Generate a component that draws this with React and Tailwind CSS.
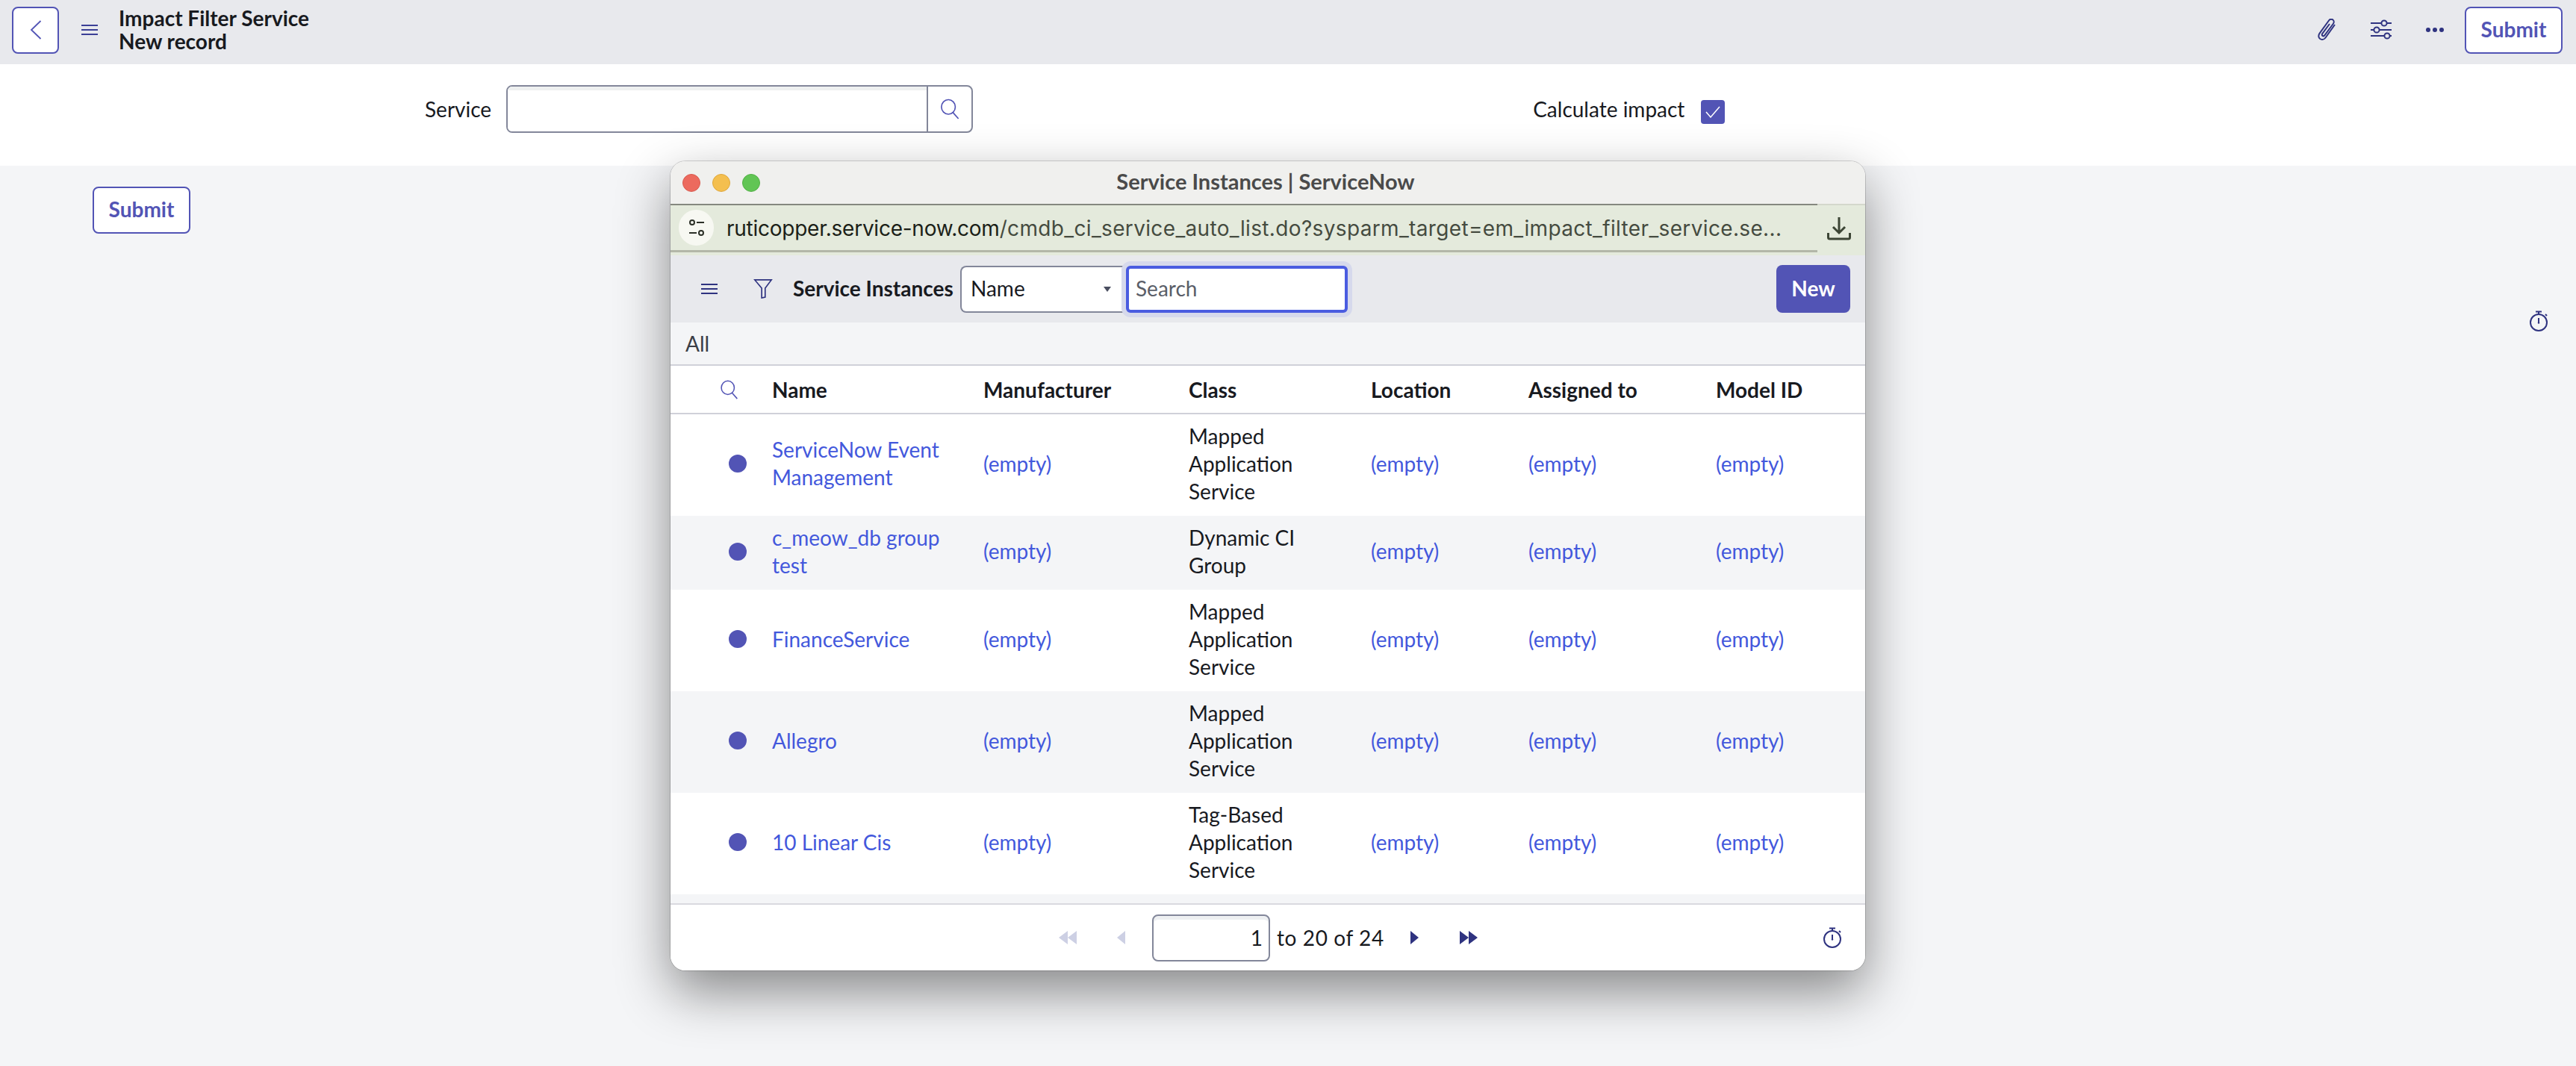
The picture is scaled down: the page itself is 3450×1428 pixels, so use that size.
const rows = [
  { name: "ServiceNow Event Management", cls: "Mapped Application Service", alt: false },
  { name: "c_meow_db group test", cls: "Dynamic CI Group", alt: true },
  { name: "FinanceService", cls: "Mapped Application Service", alt: false },
  { name: "Allegro", cls: "Mapped Application Service", alt: true },
  { name: "10 Linear Cis", cls: "Tag-Based Application Service", alt: false },
];

const cols = "grid grid-cols-[136px_283px_275px_244px_211px_251px_1fr] items-center";

function Burger({ className }) {
  return (
    <svg viewBox="0 0 22 16" className={className} fill="none" stroke="currentColor" strokeWidth="2">
      <path d="M0 2h22M0 8h22M0 14h22" />
    </svg>
  );
}

function Magnifier({ className }) {
  return (
    <svg viewBox="0 0 28 30" className={className} fill="none" stroke="currentColor" strokeWidth="1.8">
      <ellipse cx="12" cy="12" rx="10" ry="10.5" />
      <path d="M18.5 20l8 9" />
    </svg>
  );
}

function Timer({ className }) {
  return (
    <svg viewBox="0 0 26 28" className={className} fill="none" stroke="currentColor" strokeWidth="2">
      <circle cx="13" cy="16" r="11" />
      <path d="M9 1.500h8M13 2v3M22 5l2 2" />
      <path d="M13 10v6" />
      <circle cx="13" cy="16.500" r="1.200" fill="currentColor" stroke="none" />
    </svg>
  );
}

function Triangles({ dir, count, className }) {
  const d =
    dir === "left"
      ? count === 2
        ? "M12 0v18L0 9zM24 0v18L12 9z"
        : "M11 0v18L0 9z"
      : count === 2
        ? "M0 0v18l12-9zM12 0v18l12-9z"
        : "M0 0v18l11-9z";
  return (
    <svg viewBox={count === 2 ? "0 0 24 18" : "0 0 11 18"} className={className} fill="currentColor">
      <path d={d} />
    </svg>
  );
}

function SubmitButton() {
  return (
    <button className="w-[131px] h-[63px] pb-[3px] bg-white border-2 border-[#5254b5] rounded-[8px] text-[#5254b5] text-[28px] font-bold">
      Submit
    </button>
  );
}

function Popup() {
  return (
    <div className="absolute left-[898px] top-[216px] w-[1600px] h-[1084px] flex flex-col rounded-[20px] overflow-hidden bg-white shadow-[0_0_0_1px_rgba(0,0,0,0.16),0_28px_70px_rgba(0,0,0,0.45)]">
      {/* mac window title */}
      <div className="relative h-[57px] shrink-0 bg-[#f0f0ee] flex items-center pl-[16px] gap-[16px]">
        <span className="w-[24px] h-[24px] rounded-full bg-[#ec6a5e] border border-[#d85a4f]" />
        <span className="w-[24px] h-[24px] rounded-full bg-[#f4bf4f] border border-[#dea73c]" />
        <span className="w-[24px] h-[24px] rounded-full bg-[#61c554] border border-[#52b045]" />
        <div className="absolute inset-x-0 pr-[6px] pb-[4px] text-center text-[29px] font-bold text-[#4a4a4a] pointer-events-none">
          Service Instances | ServiceNow
        </div>
      </div>

      {/* url bar */}
      <div className="h-[69px] shrink-0 bg-[#e4eadc] flex items-start">
        <div className="w-[1536px] h-[65px] flex items-center pl-[11px] border-t-2 border-t-[#85887f] border-b-[3px] border-b-[#b3b7a8]">
          <div className="w-[47px] h-[48px] rounded-full bg-[#f7f8f2] flex items-center justify-center">
            <svg viewBox="0 0 22 24" className="w-[22px] h-[24px]" fill="none" stroke="#2c3028" strokeWidth="2">
              <circle cx="5" cy="5" r="3" />
              <path d="M11 5h10M1 19h10" />
              <circle cx="17" cy="19" r="3" />
            </svg>
          </div>
          <div className="ml-[17px] mt-[1px] [font-family:Inter,sans-serif] text-[28px] tracking-[0.35px] whitespace-nowrap text-[#454b40]">
            <span className="text-[#1b1f18] tracking-[-0.25px]">ruticopper.service-now.com</span>
            /cmdb_ci_service_auto_list.do?sysparm_target=em_impact_filter_service.se...
          </div>
        </div>
        <div className="flex-1 h-[64px] flex items-center justify-center pr-[6px] border-t-2 border-t-[#d4d8cc]">
          <svg viewBox="0 0 32 32" className="w-[32px] h-[32px]" fill="none" stroke="#3c4535" strokeWidth="3">
            <path d="M16 1v20M8 14l8 8 8-8" />
            <path d="M1.500 22v6a2 2 0 0 0 2 2h25a2 2 0 0 0 2-2v-6" />
          </svg>
        </div>
      </div>

      {/* list toolbar */}
      <div className="h-[90px] shrink-0 bg-[#e8e9ed] flex items-center pl-[41px] pr-[20px]">
        <Burger className="w-[22px] h-[16px] text-[#2f3380]" />
        <svg viewBox="0 0 26 28" className="w-[26px] h-[26px] ml-[48px] text-[#2f3380]" fill="none" stroke="currentColor" strokeWidth="1.8">
          <path d="M1 1h24L16 13v13l-5 1V13z" />
        </svg>
        <span className="ml-[27px] pb-[2px] w-[214px] text-[28px] font-bold text-[#181a1f] whitespace-nowrap">
          Service Instances
        </span>
        <div className="ml-[10px] w-[222px] h-[63px] pb-[2px] bg-white border-2 border-r-0 border-[#83879a] rounded-l-[8px] flex items-center pl-[12px] pr-[20px] justify-between text-[28px] text-[#181a1f]">
          Name
          <span className="mt-[3px] w-0 h-0 border-x-[5px] border-x-transparent border-t-[7px] border-t-[#4a4e60]" />
        </div>
        <div className="w-[297px] h-[63px] pb-[2px] bg-white border-4 border-[#4a5ce0] rounded-[6px] ring-[6px] ring-[#d6d9ec] flex items-center pl-[9px] text-[28px] text-[#5a5e68]">
          Search
        </div>
        <button className="ml-auto w-[99px] h-[64px] pb-[3px] rounded-[8px] bg-[#5254b5] text-white text-[28px] font-bold">
          New
        </button>
      </div>

      <div className="h-[58px] shrink-0 bg-[#f4f5f7] border-b-2 border-[#d0d1d9] flex items-center pl-[20px] text-[28px] text-[#3a3d46]">
        All
      </div>

      {/* table head */}
      <div className={`${cols} h-[65px] shrink-0 border-b-2 border-[#d0d1d9] text-[28px] font-bold text-[#181a1f]`}>
        <div className="flex justify-center pl-[21px]">
          <Magnifier className="w-[25px] h-[26px] text-[#5254b5]" />
        </div>
        <div>Name</div>
        <div>Manufacturer</div>
        <div>Class</div>
        <div>Location</div>
        <div>Assigned to</div>
        <div>Model ID</div>
      </div>

      {/* rows */}
      <div className="flex-1 bg-[#f4f5f7]">
        {rows.map((row) => (
          <div
            key={row.name}
            className={`${cols} pt-[10.5px] pb-[14.5px] text-[28px] leading-[37px] ${row.alt ? "bg-[#f4f5f7]" : "bg-white"}`}
          >
            <div className="flex justify-center pl-[44px]">
              <span className="w-[24px] h-[24px] rounded-full bg-[#5254b5]" />
            </div>
            <div className="pr-[40px] text-[#4358dc]">{row.name}</div>
            <div className="text-[#4358dc]">(empty)</div>
            <div className="pr-[70px] text-[#181a1f]">{row.cls}</div>
            <div className="text-[#4358dc]">(empty)</div>
            <div className="text-[#4358dc]">(empty)</div>
            <div className="text-[#4358dc]">(empty)</div>
          </div>
        ))}
      </div>

      {/* pagination */}
      <div className="h-[90px] shrink-0 border-t-2 border-[#d9d9df] bg-white flex items-center pl-[520px] pr-[31px] text-[28px] text-[#181a1f]">
        <Triangles dir="left" count={2} className="w-[24px] h-[18px] text-[#cdd0e4]" />
        <Triangles dir="left" count={1} className="w-[11px] h-[18px] ml-[54px] text-[#cdd0e4]" />
        <div className="ml-[36px] w-[158px] h-[63px] bg-white border-2 border-[#83879a] rounded-[8px] shadow-[inset_0_5px_0_#eef0f2] flex items-center justify-end pr-[8px]">
          1
        </div>
        <span className="ml-[9px] w-[145px] tracking-[0.6px] whitespace-nowrap">to 20 of 24</span>
        <Triangles dir="right" count={1} className="w-[11px] h-[18px] ml-[34px] text-[#2f3380]" />
        <Triangles dir="right" count={2} className="w-[24px] h-[18px] ml-[55px] text-[#2f3380]" />
        <Timer className="w-[26px] h-[28px] ml-auto text-[#2f3380]" />
      </div>
    </div>
  );
}

export default function App() {
  return (
    <div className="relative w-full h-[1428px] flex flex-col overflow-hidden bg-[#f4f5f7] [font-family:Lato,sans-serif]">
      {/* top bar */}
      <div className="h-[86px] shrink-0 bg-[#e8e9ed] flex items-center pl-[16px] pr-[18px] pb-[6px]">
        <button className="w-[63px] h-[63px] bg-white border-2 border-[#5254b5] rounded-[8px] flex items-center justify-center">
          <svg viewBox="0 0 16 26" className="w-[16px] h-[26px]" fill="none" stroke="#5254b5" strokeWidth="1.8">
            <path d="M14.500 1L2 13l12.500 12" />
          </svg>
        </button>
        <Burger className="w-[22px] h-[16px] ml-[30px] text-[#3b3f96]" />
        <div className="ml-[28px] text-[28px] leading-[31px] font-bold text-[#181a1f]">
          <div>Impact Filter Service</div>
          <div>New record</div>
        </div>
        <div className="ml-auto flex items-center">
          <svg viewBox="0 0 26 30" className="w-[26px] h-[30px] text-[#2f3380]" fill="none" stroke="currentColor" strokeWidth="2">
            <path d="M23 8L10.500 25.500c-2 2.800-5.200 3-7.300 1.500S.6 22.400 2.600 19.600L15 2.500c1.500-2 3.800-2.200 5.400-1s1.800 3.500.3 5.500L9.500 22.200c-.9 1.200-2.200 1.300-3 .7s-1-1.800-.1-3L16 7" />
          </svg>
          <svg viewBox="0 0 28 28" className="w-[28px] h-[28px] ml-[45px] text-[#2f3380]" fill="none" stroke="currentColor" strokeWidth="2">
            <path d="M0 5h14M22 5h6M0 14h4M12 14h16M0 22h18M26 22h2" />
            <circle cx="18" cy="5" r="3.600" />
            <circle cx="8" cy="14" r="3.600" />
            <circle cx="22" cy="22" r="3.600" />
          </svg>
          <svg viewBox="0 0 24 6" className="w-[24px] h-[6px] ml-[46px] text-[#2f3380]" fill="currentColor">
            <circle cx="3" cy="3" r="3" />
            <circle cx="12" cy="3" r="3" />
            <circle cx="21" cy="3" r="3" />
          </svg>
          <div className="ml-[28px]">
            <SubmitButton />
          </div>
        </div>
      </div>

      {/* form */}
      <div className="h-[136px] shrink-0 bg-white flex items-start pl-[569px] pt-[28px] text-[28px] text-[#181a1f]">
        <div className="h-[64px] flex items-center">Service</div>
        <div className="ml-[20px] w-[625px] h-[64px] flex border-2 border-[#83879a] rounded-[8px] overflow-hidden">
          <div className="flex-1 bg-white shadow-[inset_0_5px_0_#eef0f0]" />
          <div className="w-[60px] border-l-2 border-[#83879a] flex items-center justify-center">
            <Magnifier className="w-[26px] h-[28px] text-[#5254b5]" />
          </div>
        </div>
        <div className="ml-[750px] h-[64px] flex items-center">Calculate impact</div>
        <div className="ml-[22px] mt-[20px] w-[32px] h-[32px] rounded-[4px] bg-[#5254b5] flex items-center justify-center">
          <svg viewBox="0 0 20 16" className="w-[20px] h-[16px]" fill="none" stroke="white" strokeWidth="1.500">
            <path d="M1 8l6 7L19 1" />
          </svg>
        </div>
      </div>

      {/* page body */}
      <div className="flex-1 flex items-start justify-between pl-[124px] pr-[37px] pt-[28px]">
        <SubmitButton />
        <Timer className="w-[26px] h-[28px] mt-[166px] text-[#2f3380]" />
      </div>

      <Popup />
    </div>
  );
}
